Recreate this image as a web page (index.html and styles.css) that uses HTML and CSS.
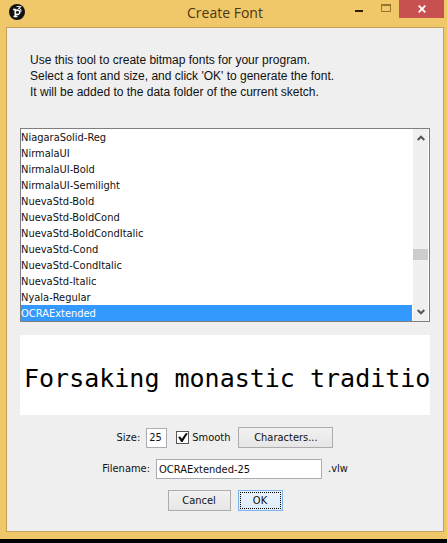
FILE: index.html
```html
<!DOCTYPE html>
<html lang="en">
<head>
    <meta charset="UTF-8">
    <title>Create Font</title>
    <link rel="stylesheet" href="styles.css">
</head>
<body>

    <div class="window">
        <!-- Title bar -->
        <header class="titlebar">
            <svg class="app-icon" width="16" height="16" viewBox="0 0 16 16" aria-hidden="true">
                <circle cx="8" cy="8" r="8" fill="#111"/>
                <path d="M4 5.500H6.200V12M4.500 12.500H8.500M6.500 7C8 5.500 10.800 6 10.800 8.200S8.500 11 6.500 10" fill="none" stroke="#fff" stroke-width="1.500"/>
                <path d="M7.500 2.500H11.500L9.800 4.500C12 4.500 12.500 6.500 11.500 8" fill="none" stroke="#ddd" stroke-width="1.200"/>
            </svg>
            <h1>Create Font</h1>
            <div class="window-buttons">
                <button type="button" class="minimize" aria-label="Minimize">
                    <svg width="8" height="8" viewBox="0 0 8 8"><path d="M0 7H8" stroke="#2b1d08" stroke-width="2"/></svg>
                </button>
                <button type="button" class="maximize" aria-label="Maximize">
                    <svg width="10" height="8" viewBox="0 0 10 8"><path d="M.5 1H9.500V7.500H.5Z" fill="none" stroke="#94752f"/><path d="M0 1H10" stroke="#94752f" stroke-width="2"/></svg>
                </button>
                <button type="button" class="close" aria-label="Close">
                    <svg width="8" height="8" viewBox="0 0 8 8"><path d="M.7 .7L7.300 7.300M7.300 .7L.7 7.300" stroke="#fff" stroke-width="1.800"/></svg>
                </button>
            </div>
        </header>

        <form class="content">
            <p class="intro">
                Use this tool to create bitmap fonts for your program.<br>
                Select a font and size, and click 'OK' to generate the font.<br>
                It will be added to the data folder of the current sketch.
            </p>

            <!-- Font list -->
            <div class="font-list">
                <select size="12" aria-label="Font">
                    <option>NiagaraSolid-Reg</option>
                    <option>NirmalaUI</option>
                    <option>NirmalaUI-Bold</option>
                    <option>NirmalaUI-Semilight</option>
                    <option>NuevaStd-Bold</option>
                    <option>NuevaStd-BoldCond</option>
                    <option>NuevaStd-BoldCondItalic</option>
                    <option>NuevaStd-Cond</option>
                    <option>NuevaStd-CondItalic</option>
                    <option>NuevaStd-Italic</option>
                    <option>Nyala-Regular</option>
                    <option selected>OCRAExtended</option>
                </select>
                <div class="scrollbar" aria-hidden="true">
                    <svg width="8" height="6" viewBox="0 0 8 6"><path d="M.7 5L4 1.700L7.300 5" fill="none" stroke="#555" stroke-width="2"/></svg>
                    <div class="track"><div class="thumb"></div></div>
                    <svg width="8" height="6" viewBox="0 0 8 6"><path d="M.7 1L4 4.300L7.300 1" fill="none" stroke="#555" stroke-width="2"/></svg>
                </div>
            </div>

            <div class="preview">Forsaking monastic traditio</div>

            <!-- Settings -->
            <div class="row">
                <label for="size">Size:</label>
                <input type="text" id="size" class="size" value="25">
                <input type="checkbox" id="smooth" checked>
                <label for="smooth" class="smooth-label">Smooth</label>
                <button type="button" class="btn characters">Characters...</button>
            </div>
            <div class="row">
                <label for="filename">Filename:</label>
                <input type="text" id="filename" class="filename" value="OCRAExtended-25">
                <span>.vlw</span>
            </div>
            <div class="row actions">
                <button type="button" class="btn cancel">Cancel</button>
                <button type="submit" class="btn ok"><span>OK</span></button>
            </div>
        </form>
    </div>

</body>
</html>
```
FILE: styles.css
```css
* {
    box-sizing: border-box;
}
body {
    margin: 0;
    background: #000;
    font-family: "DejaVu Sans Condensed", "Noto Sans", sans-serif;
    font-size: 11px;
    line-height: 16px;
    color: #111;
}
.window {
    background: #f0c869;
    padding: 0 3px 7px 6px;
}
.titlebar {
    display: grid;
    grid-template-columns: 1fr auto 1fr;
    height: 27px;
}
.app-icon {
    margin: 4px 0 0 3px;
}
h1 {
    margin: 0;
    font-family: "Open Sans", sans-serif;
    font-size: 14px;
    font-weight: normal;
    line-height: 26px;
    color: #4a3714;
}
.window-buttons {
    display: flex;
    justify-content: flex-end;
    align-items: flex-start;
}
.window-buttons button {
    display: flex;
    align-items: center;
    justify-content: center;
    width: 27px;
    height: 16px;
    padding: 0;
    border: none;
    background: none;
}
.window-buttons .close {
    width: 45px;
    height: 18px;
    background: #c75050;
}
.content {
    background: #efefef;
    border: 1px solid #c3a35a;
    padding: 24px 13px 20px;
}
.intro {
    margin: 0 0 28px;
    padding-left: 10px;
    font-family: "Liberation Sans", Arial, sans-serif;
    font-size: 12px;
}
.font-list {
    display: flex;
    border: 1px solid #7f7f7f;
    background: #fff;
}
select {
    flex: 1;
    height: 192px;
    padding: 0;
    border: none;
    border-radius: 0;
    outline: none;
    overflow: hidden;
    background: #fff;
    color: #111;
    font: inherit;
}
option {
    height: 16px;
    min-height: 16px;
    padding: 2px 0 0;
}
option:checked {
    background: #3399ff linear-gradient(#3399ff, #3399ff);
    color: #fff;
}
.scrollbar {
    display: flex;
    flex-direction: column;
    align-items: center;
    width: 17px;
    padding: 6px 0;
    border: 1px solid #fff;
    border-width: 0 1px;
    background: #f0f0f0;
}
.track {
    display: flex;
    flex-direction: column;
    flex: 1;
    align-self: stretch;
    justify-content: flex-end;
    padding-bottom: 49px;
}
.thumb {
    height: 11px;
    background: #cdcdcd;
}
.preview {
    height: 80px;
    margin: 13px 0 12px;
    padding-left: 4px;
    overflow: hidden;
    background: #fff;
    color: #000;
    font-family: "DejaVu Sans Mono", monospace;
    font-size: 25px;
    line-height: 88px;
    white-space: nowrap;
}
.row {
    display: flex;
    align-items: center;
    justify-content: center;
    gap: 6px;
    margin-bottom: 11px;
}
input[type="text"] {
    height: 20px;
    padding: 0 2px;
    border: 1px solid #abadb3;
    background: #fff;
    color: #111;
    font: inherit;
}
.size {
    width: 21px;
}
.filename {
    width: 166px;
}
input[type="checkbox"] {
    appearance: none;
    width: 13px;
    height: 13px;
    margin: 0 0 0 3px;
    border: 1px solid #555;
    background: #fff;
}
input[type="checkbox"]:checked::before {
    content: "";
    display: block;
    width: 11px;
    height: 11px;
    background: #111;
    clip-path: polygon(8% 45%, 28% 40%, 42% 62%, 78% 8%, 96% 14%, 48% 92%, 36% 92%);
}
.smooth-label {
    margin: 0 2px 0 -3px;
}
.btn {
    height: 21px;
    padding: 0;
    border: 1px solid #acacac;
    background: linear-gradient(#f1f1f1, #e6e6e6);
    color: #111;
    font: inherit;
}
.characters {
    width: 95px;
}
.actions {
    gap: 7px;
    margin-bottom: 0;
}
.cancel {
    width: 63px;
}
.ok {
    width: 45px;
    padding: 1px;
    border-color: #7eb4ea;
    background: linear-gradient(#ecf4fc, #dcecfc);
}
.ok span {
    display: block;
    border: 1px dotted #000;
    line-height: 15px;
}
```
